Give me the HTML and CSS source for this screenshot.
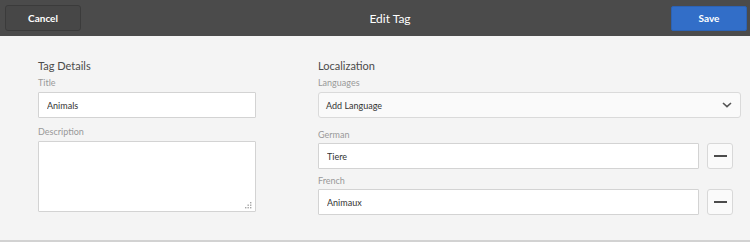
FILE: index.html
```html
<!DOCTYPE html>
<html lang="en">
<head>
  <meta charset="UTF-8" />
  <meta name="viewport" content="width=device-width, initial-scale=1.0"/>
  <title>Edit Tag</title>
  <link rel="stylesheet" href="styles.css">
</head>
<body>

<div class="page">
  <header class="topbar">
    <button class="btn btn-cancel">Cancel</button>
    <div class="topbar-title">Edit Tag</div>
    <button class="btn btn-save">Save</button>
  </header>

  <div class="content">
    <section class="col col-details">
      <h2 class="col-heading">Tag Details</h2>

      <div class="field field-title">
        <label>Title</label>
        <input type="text" class="text-input" value="Animals" />
      </div>

      <div class="field field-desc">
        <label>Description</label>
        <div class="textarea-wrap">
          <textarea class="text-area"></textarea>
          <svg class="grip" width="7" height="7" viewBox="0 0 7 7">
            <rect x="5" y="0" width="1.4" height="1.4" />
            <rect x="2.5" y="2.5" width="1.4" height="1.4" />
            <rect x="5" y="2.5" width="1.4" height="1.4" />
            <rect x="0" y="5" width="1.4" height="1.4" />
            <rect x="2.5" y="5" width="1.4" height="1.4" />
            <rect x="5" y="5" width="1.4" height="1.4" />
          </svg>
        </div>
      </div>
    </section>

    <section class="col col-local">
      <h2 class="col-heading">Localization</h2>

      <div class="field field-langs">
        <label>Languages</label>
        <div class="select">
          <span>Add Language</span>
          <svg class="chevron" width="10" height="6" viewBox="0 0 10 6">
            <path d="M1 1 L5 4.6 L9 1" />
          </svg>
        </div>
      </div>

      <div class="field lang-field lang-first">
        <label>German</label>
        <div class="lang-row">
          <input type="text" class="text-input" value="Tiere" />
          <button class="btn-remove"><span class="minus"></span></button>
        </div>
      </div>

      <div class="field lang-field">
        <label>French</label>
        <div class="lang-row">
          <input type="text" class="text-input" value="Animaux" />
          <button class="btn-remove"><span class="minus"></span></button>
        </div>
      </div>
    </section>
  </div>
</div>

</body>
</html>
```

FILE: styles.css
```css
* {
  box-sizing: border-box;
}

body {
  margin: 0;
  font-family: Lato, "Open Sans", sans-serif;
  background: #f4f4f4;
}

.page {
  height: 242px;
  display: flex;
  flex-direction: column;
  border-bottom: 2px solid #d2d2d2;
}

.topbar {
  height: 36px;
  background: #4b4b4b;
  display: flex;
  align-items: center;
  padding: 0 3px 0 5px;
}

.btn {
  font-family: inherit;
  font-size: 10px;
  font-weight: bold;
  color: #fff;
  width: 76px;
  height: 26px;
  border-radius: 3px;
  padding: 0;
}

.btn-cancel {
  background: #474747;
  border: 1px solid #3b3b3b;
}

.btn-save {
  background: #326ec8;
  border: 1px solid #2c62b4;
  border-radius: 2px;
  height: 25px;
}

.topbar-title {
  flex: 1;
  text-align: center;
  padding-left: 28px;
  color: #fff;
  font-size: 12px;
}

.content {
  flex: 1;
  display: flex;
  gap: 62px;
  padding: 23px 9px 0 38px;
}

.col-details {
  width: 218px;
}

.col-local {
  flex: 1;
}

.col-heading {
  margin: 0;
  font-size: 11px;
  line-height: 14px;
  font-weight: normal;
  color: #4b4b4b;
}

.field label {
  display: block;
  font-size: 9px;
  line-height: 11px;
  color: #999;
  margin-bottom: 4px;
}

.field-title,
.field-langs {
  margin-top: 4px;
}

.field-desc {
  margin-top: 8px;
}

.text-input {
  display: block;
  width: 100%;
  height: 26px;
  border: 1px solid #d3d3d3;
  border-radius: 1px;
  background: #fff;
  padding: 0 8px;
  font-family: inherit;
  font-size: 9px;
  color: #333;
  outline: none;
}

.textarea-wrap {
  position: relative;
}

.text-area {
  display: block;
  width: 100%;
  height: 71px;
  border: 1px solid #d3d3d3;
  border-radius: 1px;
  background: #fff;
  resize: none;
  outline: none;
}

.grip {
  position: absolute;
  right: 4px;
  bottom: 3px;
  fill: #a5a5a5;
}

.select {
  height: 26px;
  display: flex;
  align-items: center;
  justify-content: space-between;
  padding: 0 8px 0 7px;
  background: #fafafa;
  border: 1px solid #dadada;
  border-radius: 3px;
  font-size: 9px;
  color: #333;
}

.chevron {
  fill: none;
  stroke: #555;
  stroke-width: 1.6;
}

.lang-field label {
  margin-bottom: 3px;
}

.lang-first {
  margin-top: 11px;
}

.lang-field + .lang-field {
  margin-top: 6px;
}

.lang-row {
  display: flex;
  gap: 8px;
  padding-right: 8px;
}

.lang-row .text-input {
  flex: 1;
}

.btn-remove {
  width: 26px;
  height: 26px;
  flex: none;
  background: #fafafa;
  border: 1px solid #d8d8d8;
  border-radius: 3px;
  display: flex;
  align-items: center;
  justify-content: center;
  padding: 0;
}

.minus {
  width: 13px;
  height: 2px;
  background: #4b4b4b;
}
```
